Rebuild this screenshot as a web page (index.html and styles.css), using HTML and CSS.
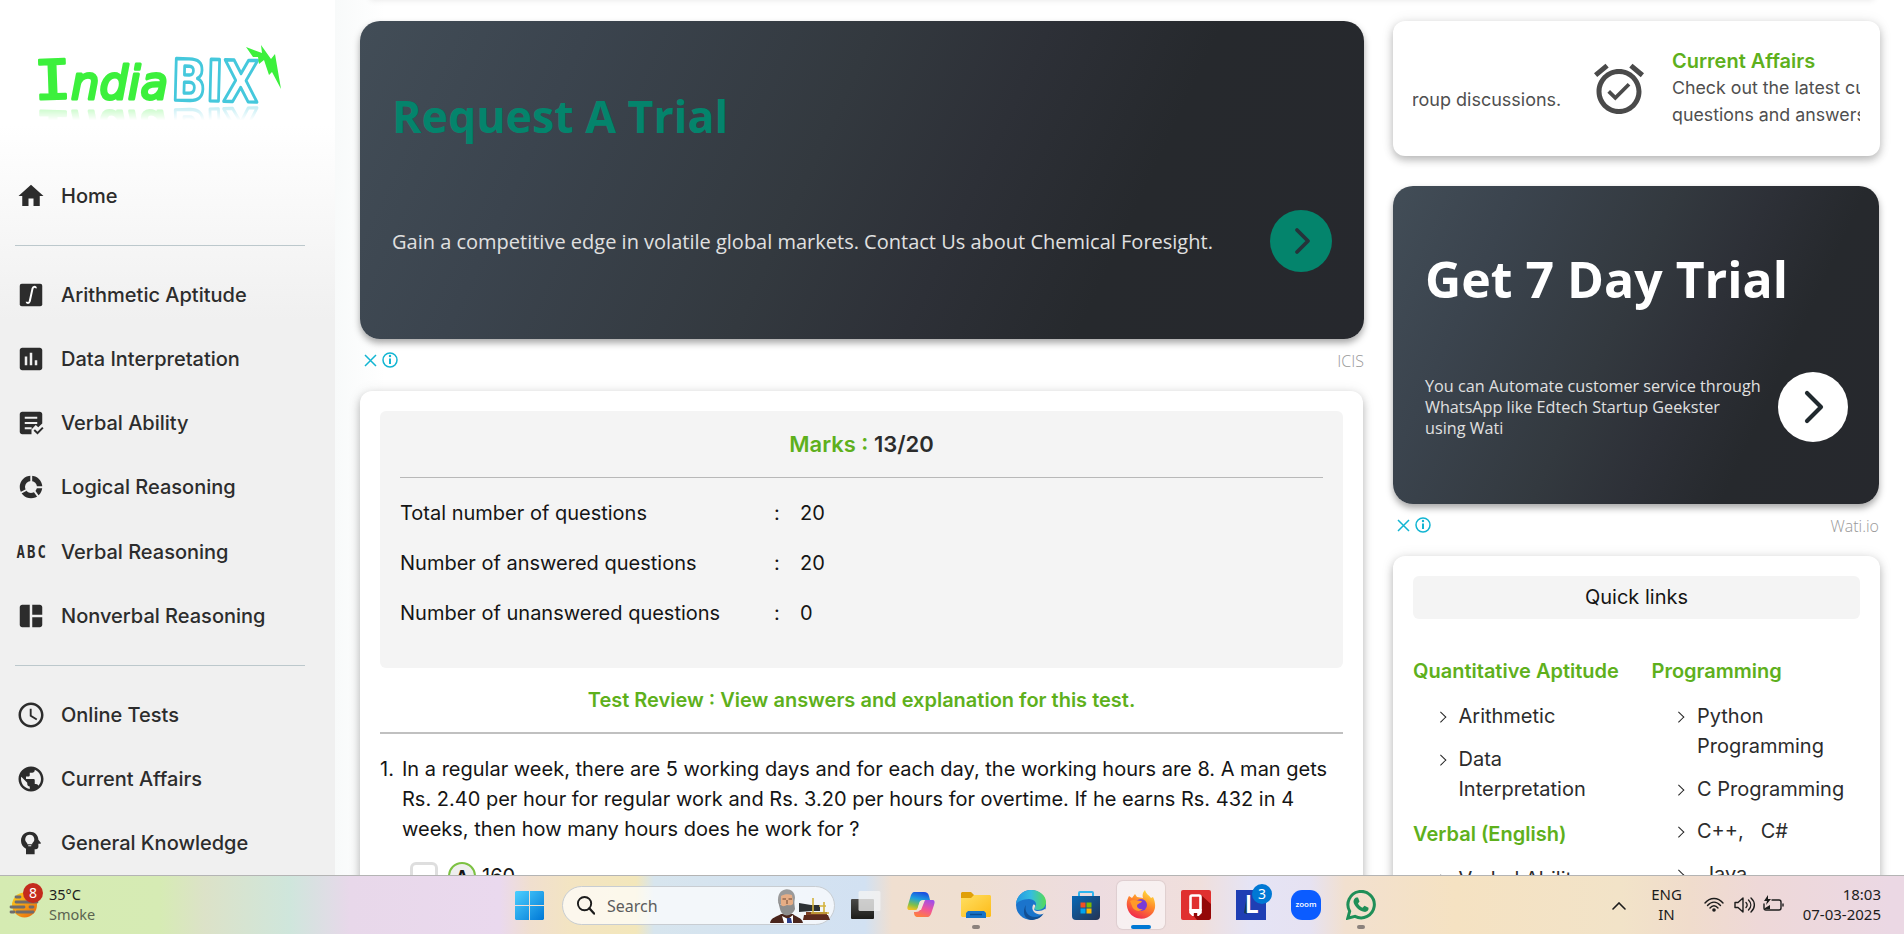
FILE: index.html
```html
<!DOCTYPE html>
<html lang="en">
<head>
<meta charset="utf-8">
<title>IndiaBIX - Online Test</title>
<link rel="stylesheet" href="styles.css">
</head>
<body>
<div class="screen">
  <div class="page">
    <aside class="sidebar">
      <svg class="logo" viewBox="0 0 250 62">
        <text class="logo-i" x="0" y="54" textLength="37" lengthAdjust="spacingAndGlyphs" transform="rotate(-2 18 35)">I</text>
        <text class="logo-india" x="37" y="54" textLength="97" lengthAdjust="spacingAndGlyphs">ndia</text>
        <text class="logo-bix" x="137" y="55" textLength="87" lengthAdjust="spacingAndGlyphs" transform="rotate(1.5 139 56)">BIX</text>
        <path fill="#3cf03c" d="M212 2L228 8 227 0 237 14 241 9 247 44 238 27 235 30 230 15 225 19 224 12 219 12z"/>
      </svg>
      <nav class="nav">
        <a class="nav-item"><svg class="ico" viewBox="0 0 24 24"><path d="M10 20v-6h4v6h5v-8h3L12 3 2 12h3v8z"/></svg><span>Home</span></a>
        <hr class="nav-line">
        <a class="nav-item"><svg class="ico" viewBox="0 0 24 24"><rect x="3" y="3" width="18" height="18" rx="1.6"/><path d="M15.8 6.6c.2-1.5-2-1.8-2.6.3L11 17c-.5 1.8-2.4 1.7-2.5.4" fill="none" stroke="#fff" stroke-width="1.6"/></svg><span>Arithmetic Aptitude</span></a>
        <a class="nav-item"><svg class="ico" viewBox="0 0 24 24"><path d="M19 3H5c-1.100 0-2 .9-2 2v14c0 1.100.9 2 2 2h14c1.100 0 2-.9 2-2V5c0-1.100-.9-2-2-2zM9 17H7v-7h2v7zm4 0h-2V7h2v10zm4 0h-2v-4h2v4z"/></svg><span>Data Interpretation</span></a>
        <a class="nav-item"><svg class="ico" viewBox="0 0 24 24"><path d="M5 3h14c1.100 0 2 .9 2 2v7.300l-3.200 3-2-1.800-3.400 3.600V21H5c-1.100 0-2-.9-2-2V5c0-1.100.9-2 2-2z"/><path d="M7 7.800h10M7 12h10M7 16.200h5.500" stroke="#f0f0f0" stroke-width="1.500"/><path d="M14.500 17.600l2.700 2.600 4.400-4.500" fill="none" stroke="#f0f0f0" stroke-width="4.500"/><path d="M14.600 17.600l2.600 2.500 4.300-4.400" fill="none" stroke="#2c2c2c" stroke-width="1.600"/></svg><span>Verbal Ability</span></a>
        <a class="nav-item"><svg class="ico" viewBox="0 0 24 24"><circle cx="12" cy="12" r="6.900" fill="none" stroke="#2c2c2c" stroke-width="4.200"/><path d="M12.200 2v6M22 12.200h-6M18.300 20.300l-3.600-5M3.200 17l5-2.600" stroke="#f0f0f0" stroke-width="1.500"/></svg><span>Logical Reasoning</span></a>
        <a class="nav-item"><svg class="ico" viewBox="0 0 24 24"><text class="abc" x="0" y="17" textLength="28.500" lengthAdjust="spacing" transform="translate(.3 0) scale(.83 1)">ABC</text></svg><span>Verbal Reasoning</span></a>
        <a class="nav-item"><svg class="ico" viewBox="0 0 24 24"><path d="M11 21H5c-1.100 0-2-.9-2-2V5c0-1.100.9-2 2-2h6v18zm2 0h6c1.100 0 2-.9 2-2v-6h-8v8zm8-10V5c0-1.100-.9-2-2-2h-6v8h8z"/></svg><span>Nonverbal Reasoning</span></a>
        <hr class="nav-line">
        <a class="nav-item"><svg class="ico" viewBox="0 0 24 24"><path d="M11.990 2C6.470 2 2 6.480 2 12s4.470 10 9.990 10C17.520 22 22 17.520 22 12S17.520 2 11.990 2zM12 20c-4.420 0-8-3.580-8-8s3.580-8 8-8 8 3.580 8 8-3.580 8-8 8zm.5-13H11v6l5.250 3.150.75-1.230-4.500-2.670z"/></svg><span>Online Tests</span></a>
        <a class="nav-item"><svg class="ico" viewBox="0 0 24 24"><path d="M12 2C6.480 2 2 6.480 2 12s4.480 10 10 10 10-4.480 10-10S17.520 2 12 2zm-1 17.930c-3.950-.49-7-3.850-7-7.930 0-.62.08-1.210.21-1.790L9 15v1c0 1.100.9 2 2 2v1.930zm6.900-2.540c-.26-.81-1-1.390-1.900-1.390h-1v-3c0-.55-.45-1-1-1H8v-2h2c.55 0 1-.45 1-1V7h2c1.100 0 2-.9 2-2v-.41c2.930 1.190 5 4.060 5 7.410 0 2.080-.8 3.970-2.100 5.390z"/></svg><span>Current Affairs</span></a>
        <a class="nav-item"><svg class="ico" viewBox="0 0 24 24"><path d="M11 3c4.200 0 6.700 2.700 6.900 6.300l1.900 2.500c.2.400 0 .8-.5.800h-1.400V15c0 1.100-.9 2-2 2h-1v4H8v-4.500C5.500 15.300 4 13 4 10.200 4 6 7.200 3 11 3z"/><path fill="#f0f0f0" d="M11 5.500a3.600 3.600 0 0 0-2 6.600V13h4v-.9a3.600 3.600 0 0 0-2-6.600zM9.800 13.800h2.400v.8H9.800z"/></svg><span>General Knowledge</span></a>
      </nav>
    </aside>

    <main class="main">
      <section class="ad ad-wide">
        <h2 class="ad-title green">Request A Trial</h2>
        <div class="ad-row">
          <p class="ad-text">Gain a competitive edge in volatile global markets. Contact Us about Chemical Foresight.</p>
          <span class="ad-go"><svg viewBox="0 0 62 62"><path d="M27 20l11 11-11 11" fill="none" stroke="#26333a" stroke-width="3.800" stroke-linecap="round" stroke-linejoin="round"/></svg></span>
        </div>
      </section>
      <div class="ad-foot">
        <svg class="ad-marks" viewBox="0 0 36 18"><path d="M1 4l11 11M12 4L1 15" stroke="#12b5d2" stroke-width="1.500"/><circle cx="26" cy="9" r="7" fill="none" stroke="#12b5d2" stroke-width="1.500"/><path d="M26 7.500v5.500" fill="none" stroke="#12b5d2" stroke-width="2"/><circle cx="26" cy="5" r="1.200" fill="#12b5d2"/></svg>
        <span>ICIS</span>
      </div>

      <section class="card result">
        <div class="score">
          <h3 class="marks"><span>Marks :</span> 13/20</h3>
          <dl class="stats">
            <dt>Total number of questions</dt><dd class="colon">:</dd><dd>20</dd>
            <dt>Number of answered questions</dt><dd class="colon">:</dd><dd>20</dd>
            <dt>Number of unanswered questions</dt><dd class="colon">:</dd><dd>0</dd>
          </dl>
        </div>
        <h4 class="review">Test Review : View answers and explanation for this test.</h4>
        <div class="question">
          <span class="q-num">1.</span>
          <p class="q-text">In a regular week, there are 5 working days and for each day, the working hours are 8. A man gets<br>Rs. 2.40 per hour for regular work and Rs. 3.20 per hours for overtime. If he earns Rs. 432 in 4<br>weeks, then how many hours does he work for ?</p>
        </div>
        <div class="option"><span class="check"></span><span class="letter">A</span><span>160</span></div>
      </section>
    </main>

    <aside class="side">
      <section class="card ticker">
        <div class="ticker-view">
          <span class="tick-old">roup discussions.</span>
          <svg class="alarm" viewBox="0 0 24 24"><path d="M22 5.720l-4.600-3.860-1.290 1.530 4.600 3.860L22 5.720zM7.880 3.390L6.600 1.860 2 5.710l1.290 1.530 4.590-3.850zM12 4c-4.970 0-9 4.030-9 9s4.020 9 9 9c4.970 0 9-4.030 9-9s-4.030-9-9-9zm0 16c-3.870 0-7-3.130-7-7s3.130-7 7-7 7 3.130 7 7-3.130 7-7 7zm-1.460-5.470L8.410 12.400l-1.060 1.060 3.180 3.180 6-6-1.060-1.060-4.930 4.950z"/></svg>
          <div class="tick-new"><b>Current Affairs</b><span>Check out the latest current</span><span>questions and answers on</span></div>
        </div>
      </section>
      <section class="ad ad-box">
        <h2 class="ad-title">Get 7 Day Trial</h2>
        <div class="ad-row">
          <p class="ad-text">You can Automate customer service through<br>WhatsApp like Edtech Startup Geekster<br>using Wati</p>
          <span class="ad-go"><svg viewBox="0 0 70 70"><path d="M29 21l14 14-14 14" fill="none" stroke="#20292e" stroke-width="4.200" stroke-linecap="round" stroke-linejoin="round"/></svg></span>
        </div>
      </section>
      <div class="ad-foot">
        <svg class="ad-marks" viewBox="0 0 36 18"><path d="M1 4l11 11M12 4L1 15" stroke="#12b5d2" stroke-width="1.500"/><circle cx="26" cy="9" r="7" fill="none" stroke="#12b5d2" stroke-width="1.500"/><path d="M26 7.500v5.500" fill="none" stroke="#12b5d2" stroke-width="2"/><circle cx="26" cy="5" r="1.200" fill="#12b5d2"/></svg>
        <span>Wati.io</span>
      </div>
      <section class="card links">
        <h3 class="links-head">Quick links</h3>
        <div class="links-cols">
          <div class="links-col">
            <h4>Quantitative Aptitude</h4>
            <ul><li>Arithmetic</li><li>Data<br>Interpretation</li></ul>
            <h4>Verbal (English)</h4>
            <ul><li>Verbal Ability</li></ul>
          </div>
          <div class="links-col">
            <h4>Programming</h4>
            <ul><li>Python<br>Programming</li><li>C Programming</li><li>C++, &nbsp; C#</li><li>&nbsp;Java</li></ul>
          </div>
        </div>
      </section>
    </aside>
    <div class="top-edge"></div>
  </div>

  <footer class="taskbar">
    <div class="weather">
      <svg class="w-icon" viewBox="0 0 36 36"><defs><linearGradient id="sun" x1="0" y1="0" x2="1" y2="1"><stop offset="0" stop-color="#ffd21c"/><stop offset="1" stop-color="#e8640c"/></linearGradient></defs><circle cx="15.500" cy="22" r="12.500" fill="url(#sun)"/><path d="M7 14h4M7 19h21M2 24h13M21 24h3M2 29h3M8 29h16" stroke="#6f6c6c" stroke-width="2.800" stroke-linecap="round"/><circle cx="24" cy="10" r="10" fill="#c42b1c"/><text x="24" y="15" text-anchor="middle" class="badge-num">8</text></svg>
      <div class="w-text"><span>35°C</span><span class="dim">Smoke</span></div>
    </div>
    <div class="apps">
      <svg class="start" viewBox="0 0 29 29"><defs><linearGradient id="win" x1="0" y1="0" x2="1" y2="1" gradientUnits="objectBoundingBox"><stop offset="0" stop-color="#4cd0ff"/><stop offset="1" stop-color="#0078d6"/></linearGradient></defs><path fill="url(#win)" d="M1 0h13v14H0V1zM15 0h13l1 1v13H15zM0 15h14v14H1l-1-1zM15 15h14v13l-1 1H15z"/></svg>
      <div class="search">
        <svg class="lens" viewBox="0 0 20 20"><circle cx="9" cy="8" r="7" fill="none" stroke="#1c1c1c" stroke-width="2"/><path d="M14 13l5 5.500" stroke="#1c1c1c" stroke-width="2.400" stroke-linecap="round"/></svg>
        <span>Search</span>
        <svg class="doodle" viewBox="0 0 60 34"><path fill="#4a251c" d="M0 34c1-6 7-6 11-9h12c2 3 9 3 10 9z"/><path fill="#fff" d="M12 27l6 3 5-4v8H14z"/><path fill="#2c3f8c" d="M17 29h4l1 5h-5z"/><path fill="#9a9a9a" d="M8 12C7-3 25-3 25 9l-1 6H9z"/><path fill="#e6ad85" d="M11 7c3-2 8-2 11-1l1 6v9H11z"/><path fill="#8d8d8d" d="M8 12l3 4c2 2 4 1 6 0 2 0 4 1 6-1l1-3 1 8c-3 8-13 9-15 0z"/><path d="M12.500 10h3.500M18.500 10h3.500M17 11v4" stroke="#6b4632"/><path fill="#5c2a1c" d="M34 26h24l2 5H33z"/><path fill="#7d4023" d="M36 23h21v3H36z"/><path fill="#2d3134" d="M29 14l12 2h9v6h-9l-12 1z"/><path d="M43 9v14M54 13v10M41 24h18M49 17h7" stroke="#d3b23c" stroke-width="1.600"/></svg>
      </div>
      <div class="icons">
        <span class="slot"><svg viewBox="0 0 30 30"><defs><linearGradient id="tv" x1="0" y1="0" x2="0" y2="1"><stop offset="0" stop-color="#4a4a48"/><stop offset="1" stop-color="#1c1c1a"/></linearGradient></defs><rect y="9" width="23" height="20" rx="1" fill="url(#tv)"/><rect x="7.500" y="1" width="22" height="20" rx="1.500" fill="#f4f4f4" fill-opacity=".78"/></svg></span>
        <span class="slot"><svg viewBox="0 0 30 30"><defs><linearGradient id="cp1" x1=".6" y1="0" x2=".3" y2="1"><stop offset="0" stop-color="#1a4fe0"/><stop offset=".4" stop-color="#1ba0dd"/><stop offset=".75" stop-color="#7fc04a"/><stop offset="1" stop-color="#f0c020"/></linearGradient><linearGradient id="cp2" x1=".7" y1="0" x2=".3" y2="1"><stop offset="0" stop-color="#a04fe8"/><stop offset=".5" stop-color="#f0559a"/><stop offset="1" stop-color="#ff7f3c"/></linearGradient></defs><path fill="url(#cp1)" d="M8 2h10c3 0 4 1 5 4l1 4h-7c-2 0-3 1-4 4l-1 4c-1 2-2 2-4 2H4c-3 0-3-2-2-5L5 5c1-2 2-3 3-3z"/><path fill="url(#cp2)" d="M22 27H12c-3 0-4-2-4-5 2 0 5 0 6-2l4-9c0-1 1-1 3-1h5c3 0 3 2 2 5l-3 9c-1 2-2 3-3 3z"/><path fill="#f2e4d8" d="M14 11l5-1-4 10h-4z"/></svg></span>
        <span class="slot running"><svg viewBox="0 0 30 30"><defs><linearGradient id="fo" x1="0" y1="0" x2="1" y2="1"><stop offset="0" stop-color="#ffdf62"/><stop offset="1" stop-color="#fdbb18"/></linearGradient></defs><path fill="#e0a008" d="M1 2h9l3 3v5H0V3z"/><path fill="url(#fo)" d="M0 8h10l3-3h16l1 1v20l-1 1H1l-1-1z"/><path fill="#1673c8" d="M5 28v-5l2-2h16l2 2v5z"/><path d="M9 24.500h12" stroke="#0a4c8f" stroke-width="1.500"/></svg></span>
        <span class="slot"><svg viewBox="0 0 30 30"><defs><linearGradient id="ed" x1="0" y1=".3" x2="1" y2=".3"><stop offset="0" stop-color="#2297e2"/><stop offset=".5" stop-color="#35bde0"/><stop offset="1" stop-color="#55db55"/></linearGradient></defs><circle cx="15" cy="15" r="15" fill="#1b74cc"/><path fill="url(#ed)" d="M0 14C1 5 8 0 15 0c9 0 15 6 15 12 0 5-4 8-8 8-3 0-5-1-3-3 3-4-1-8-6-8C7 9 1 12 0 14z"/><path fill="#124f94" d="M10 15c-2 6 2 12 9 12 4 0 7-2 9-4-3 5-8 7-13 7-7-1-9-9-5-15z"/><path fill="#f0dfd6" d="M19 17c-2 3 0 4 3 4 3 0 5-1 7-2l1 1-1 3c-3 2-8 2-11-1-2-2-2-5-1-7 1-1 3 0 2 2z"/></svg></span>
        <span class="slot"><svg viewBox="0 0 30 30"><defs><linearGradient id="st" x1="0" y1="0" x2="1" y2="1"><stop offset="0" stop-color="#0669b8"/><stop offset="1" stop-color="#263352"/></linearGradient></defs><path d="M8 7V3q0-1 1-1h12q1 0 1 1v4" fill="none" stroke="#2fb4ee" stroke-width="2"/><path fill="url(#st)" d="M1 6h28v20q0 4-4 4H5q-4 0-4-4z"/><path fill="#f25022" d="M9.500 12.500h5v5h-5z"/><path fill="#7fba00" d="M15.500 12.500h5v5h-5z"/><path fill="#00a4ef" d="M9.500 18.500h5v5h-5z"/><path fill="#ffb900" d="M15.500 18.500h5v5h-5z"/></svg></span>
        <span class="slot active"><svg viewBox="0 0 30 30"><defs><linearGradient id="ff" x1=".8" y1="0" x2=".3" y2="1"><stop offset="0" stop-color="#ffe640"/><stop offset=".45" stop-color="#ff8a2a"/><stop offset="1" stop-color="#f0244e"/></linearGradient></defs><path fill="url(#ff)" d="M3 6l3 2 3-4 2 3 6 1c-1-3 0-6 2-8 1 4 4 5 6 8l2-1c3 6 3 13-1 17-6 7-18 6-23-2C0 17 0 11 3 6z"/><circle cx="15" cy="15" r="6" fill="#7a3bd8"/><path fill="#ff9a2a" d="M4 11c4-2 7 0 12 0-1 3-5 2-5 5 0 2 3 4 6 3-4 4-10 1-11-3z"/></svg></span>
        <span class="slot"><svg viewBox="0 0 30 30"><rect width="30" height="30" rx="2" fill="#e0302f"/><path fill="#940808" d="M20 5l10 9v14l-2 2H16l-4-5z"/><rect x="9.500" y="5.500" width="10" height="15" rx="1.500" fill="#e0302f" stroke="#fff" stroke-width="2.600"/><path fill="#fff" d="M8.200 19h12.600v4l-3 3h-1.600v-3h-3.400v3h-1.600l-3-3z"/></svg></span>
        <span class="slot"><svg viewBox="0 0 30 30"><rect width="30" height="30" fill="#1f3fb4"/><path fill="#153a50" d="M11 5L8 23l3 1z"/><text class="l-letter" x="9.500" y="23" textLength="13" lengthAdjust="spacingAndGlyphs">L</text></svg><b class="count">3</b></span>
        <span class="slot"><svg viewBox="0 0 30 30"><rect width="30" height="30" rx="11" fill="#0b5cff"/><text class="zoom-word" x="4.500" y="17" textLength="21" lengthAdjust="spacingAndGlyphs">zoom</text></svg></span>
        <span class="slot running"><svg viewBox="0 0 30 30"><path fill="none" stroke="#1f8f58" stroke-width="3" d="M1.800 28.200l1.900-7A13.200 13.200 0 1 1 9 26.300z"/><path fill="#1f8f58" d="M10 7.500h2l1.500 4-1.500 2c1 2 2.500 3.500 4.500 4.300l2-2 4 2c.5 3-2 4.500-4.500 4C13 21 8.500 16.500 7.500 12c0-2 1-4 2.500-4.500z"/></svg></span>
      </div>
    </div>
    <div class="tray">
      <svg class="chev" viewBox="0 0 14 8"><path d="M1 7l6-6 6 6" fill="none" stroke="#1c1c1c" stroke-width="1.600" stroke-linecap="round"/></svg>
      <div class="lang"><span>ENG</span><span>IN</span></div>
      <svg class="status" viewBox="0 0 80 20"><g fill="none" stroke="#1c1c1c" stroke-width="1.400" stroke-linecap="round"><path d="M1 8c5-6 13-6 18 0"/><path d="M3.500 10.500c4-4.500 9-4.500 13 0"/><path d="M6 13c2.500-3 5.500-3 8 0"/><path d="M31 7.500h3l5-4.500v14l-5-4.500h-3z" stroke-linejoin="round"/><path d="M42 7.500c1.500 1.500 1.500 3.500 0 5M44.500 5c3 3 3 7 0 10M47 3c4.500 4 4.500 10 0 14"/><path d="M68 5h7q2 0 2 2v6q0 2-2 2H62q-2 0-2-2V9M79 9v2"/></g><circle cx="10" cy="15" r="1.800" fill="#1c1c1c"/><path fill="#1c1c1c" d="M64 0l-4 6h3l-1 4 5-6h-3zM61 13l5-3v4h-5z"/></svg>
      <div class="clock"><span>18:03</span><span>07-03-2025</span></div>
    </div>
  </footer>
</div>
</body>
</html>
```
FILE: styles.css
```css
* { box-sizing: border-box; }
body { margin: 0; font-family: Inter, "Liberation Sans", sans-serif; font-size: 20px; color: #151515; }
h2, h3, h4, p, ul, dl, dd { margin: 0; padding: 0; }
.screen { width: 1904px; height: 934px; overflow: hidden; display: flex; flex-direction: column; }
.page { position: relative; height: 875px; overflow: hidden; display: flex; background: linear-gradient(90deg, #f8fafa 335px, #fff 385px); }
.top-edge { position: absolute; left: 370px; right: 30px; top: -10px; height: 8px; box-shadow: 0 2px 6px rgba(0,0,0,.1); }

.sidebar { flex: none; width: 335px; height: 875px; padding-left: 15px; background: linear-gradient(#fff 125px, #f0f0f0 320px); }
.logo { display: block; width: 250px; height: 62px; margin: 45px 0 0 19px; overflow: visible; -webkit-box-reflect: below -4px linear-gradient(transparent 72%, rgba(0,0,0,.4)); }
.logo text { font-family: "DejaVu Sans Mono", monospace; fill: #3cf03c; stroke: #3cf03c; stroke-width: 2.500; stroke-linejoin: round; font-size: 54px; }
.logo .logo-india { font-family: "DejaVu Sans", sans-serif; font-style: oblique; font-size: 47px; stroke-width: 3; }
.logo .logo-bix { font-family: "DejaVu Sans", sans-serif; font-weight: bold; font-size: 57px; fill: #fff; stroke: #45c8dc; stroke-width: 3.400; }
.nav { margin-top: 57px; }
.nav-item { display: flex; align-items: center; gap: 15px; height: 64.100px; padding-left: 1px; font-weight: 500; color: #2c2c2c; }
.ico { width: 30px; height: 30px; fill: #2c2c2c; }
.abc { font: bold 13.500px "DejaVu Sans Mono", monospace; }
.nav-line { width: 290px; height: 1px; border: 0; margin: 17px 0; background: #bcc8cc; }

.main { width: 1004px; margin: 21px 0 0 25px; flex: none; }
.side { width: 487px; margin: 21px 0 0 29px; flex: none; }
.card { background: #fff; border-radius: 12px; box-shadow: 0 4px 8px rgba(0,0,0,.25), 0 0 14px rgba(0,0,0,.08); }
.ad { height: 318px; border-radius: 20px; padding-left: 32px; color: #fff; font-family: "Open Sans", sans-serif; background: linear-gradient(115deg, #424d57 0%, #3b444e 20%, #33393f 45%, #2d3037 60%, #26292d 75%, #26282d 100%); box-shadow: 0 4px 7px rgba(0,0,0,.35); }
.ad-title { font-size: 44.700px; line-height: 60px; font-weight: 700; }
.ad-title.green { color: #04846c; }
.ad-row { display: flex; align-items: center; justify-content: space-between; }
.ad-text { color: #e0e0e0; }
.ad-go { display: flex; flex: none; border-radius: 50%; }
.ad-go svg { width: 100%; }
.ad-wide { padding-top: 65px; padding-right: 32px; }
.ad-wide .ad-row { margin-top: 64px; }
.ad-wide .ad-text { font-size: 20px; }
.ad-wide .ad-go { width: 62px; height: 62px; background: #04846c; }
.ad-box { width: 486px; margin-top: 30px; padding: 59px 31px 0 32px; }
.ad-box .ad-title { font-size: 50px; line-height: 68px; }
.ad-box .ad-row { margin-top: 59px; }
.ad-box .ad-text { font-size: 16.200px; line-height: 21px; white-space: nowrap; }
.ad-box .ad-go { width: 70px; height: 70px; background: #fff; }
.ad-foot { height: 52px; padding: 11px 0 0 4px; display: flex; justify-content: space-between; align-items: flex-start; font: 300 16px/22px "Open Sans", sans-serif; color: #999; }
.side .ad-foot { padding-right: 1px; }
.ad-marks { width: 36px; height: 18px; margin-top: 1px; }

.result { width: 1003px; height: 560px; padding: 20px; }
.score { height: 257px; padding: 0 20px; border-radius: 6px; background: #f4f4f4; }
.marks { height: 67px; border-bottom: 1px solid #b8b8b8; font-size: 22px; font-weight: 600; line-height: 66px; text-align: center; color: #2c2c2c; }
.marks span, .review { color: #5eb01c; }
.stats { margin-top: 10px; display: grid; grid-template-columns: 374px 26px 1fr; line-height: 50px; }
.review { height: 66px; border-bottom: 2px solid #c0c0c0; text-align: center; font-size: 20px; font-weight: 600; line-height: 64px; }
.question { margin-top: 20px; display: flex; line-height: 30px; }
.q-num { width: 22px; }
.option { display: flex; margin: 18px 0 0 30px; line-height: 29px; }
.check { width: 28px; height: 28px; border: 3px solid #dedede; border-radius: 6px; }
.letter { width: 28px; height: 28px; margin: 0 6px 0 10px; border: 2px solid #7cc142; border-radius: 50%; background: #eee; font-size: 17px; font-weight: 700; line-height: 26px; text-align: center; }

.ticker { height: 135px; padding: 0 20px; color: #4f4f4f; font-size: 17.800px; }
.ticker-view { height: 135px; display: flex; overflow: hidden; white-space: nowrap; line-height: 27px; }
.tick-old { flex: none; width: 176px; padding-top: 65px; margin-left: -1px; font-size: 18px; }
.alarm { flex: none; width: 60px; height: 60px; margin: 38px 23px 0 1px; fill: #4a4a4a; }
.tick-new { display: flex; flex-direction: column; padding-top: 27px; }
.tick-new b { font-size: 20px; font-weight: 600; color: #5eb01c; line-height: 26px; }
.links { height: 400px; padding: 20px; }
.links-head { height: 43px; border-radius: 6px; background: #f4f4f4; font-size: 20px; font-weight: 400; line-height: 43px; text-align: center; }
.links-cols { display: flex; margin-top: 37px; line-height: 30px; }
.links-col { width: 238.500px; flex: none; }
.links-col h4 { font-size: 20px; font-weight: 600; color: #5eb01c; white-space: nowrap; }
.links-col ul { list-style: none; padding: 2px 0 3px 45.500px; color: #2c2c2c; }
.links-col li { position: relative; margin: 12.800px 0; white-space: nowrap; }
.links-col li::before { content: ""; position: absolute; left: -22px; top: 12px; width: 6.500px; height: 6.500px; border: solid #222; border-width: 1.700px 1.700px 0 0; transform: rotate(45deg); }

.taskbar { height: 59px; display: flex; border-top: 1px solid #b4b4b4; font: 15.500px/20px "Noto Sans", "Open Sans", sans-serif; color: #1c1c1c; background: linear-gradient(90deg, #d5ebb2 0, #d6ebb4 160px, #dce2c8 205px, #cfe6dc 290px, #e8d8ea 350px, #ead9ee 500px, #f0dfcf 530px, #f3e4c2 570px, #f3e7bb 636px, #d7e5ee 654px, #d2e1f2 865px, #f0dfd0 892px, #efdfd1 960px, #eddce0 1095px, #f0dfdc 1200px, #e5e4f5 1250px, #e6e2f2 1310px, #f2e0cf 1345px, #f5e2c2 1455px, #f2e3c8 1620px, #f0dccc 1690px, #eed8d8 1760px, #ebd8e4 1890px); }
.weather { width: 515px; display: flex; padding: 7px 0 0 9px; gap: 4px; flex: none; }
.w-icon { width: 36px; height: 36px; }
.badge-num { font: 14px "Noto Sans", sans-serif; fill: #fff; }
.w-text, .lang, .clock { display: flex; flex-direction: column; }
.w-text { font-size: 14.500px; margin-top: 1px; }
.dim { color: #5b6450; }
.apps { display: flex; width: 875px; flex: none; }
.start { width: 29px; height: 29px; margin-top: 15px; }
.search { width: 273px; height: 39px; margin: 10px 3px 0 18px; padding: 0 4px 0 13px; display: flex; align-items: center; border: 1px solid #c8cdd2; border-radius: 20px; background: rgba(255,255,255,.7); font-size: 16px; color: #5c5c5c; }
.lens { width: 19px; height: 19px; margin-right: 12px; }
.doodle { width: 60px; height: 34px; margin-left: auto; }
.icons { display: flex; padding-top: 5px; }
.slot { position: relative; width: 55px; height: 48px; display: flex; justify-content: center; padding-top: 9px; }
.slot svg { width: 30px; height: 30px; }
.slot.active { margin: 0 3.500px; width: 48px; border-radius: 6px; background: rgba(255,255,255,.55); box-shadow: 0 0 1px 1px rgba(0,0,0,.07); }
.slot.running::after, .slot.active::after { content: ""; position: absolute; bottom: 0; left: 50%; width: 8px; height: 4px; margin-left: -4px; border-radius: 2px; background: #8b817c; }
.slot.active::after { width: 20px; margin-left: -10px; background: #0078d4; }
.count { position: absolute; left: 29px; top: 3px; width: 20px; height: 20px; border-radius: 50%; background: #0078d4; color: #fff; font-weight: 400; font-size: 14px; text-align: center; }
.l-letter { font: bold 25px "Liberation Sans", sans-serif; fill: #fff; }
.zoom-word { font: 600 7.500px "Open Sans", sans-serif; fill: #fff; }
.tray { display: flex; flex: 1; padding-right: 23px; justify-content: flex-end; }
.chev { width: 14px; height: 8px; margin-top: 26px; margin-right: 26px; }
.lang { width: 30px; align-items: center; margin: 8px 22px 0 0; font-size: 15px; }
.status { width: 80px; height: 20px; margin: 19px 18.500px 0 0; }
.clock { width: 79px; align-items: flex-end; margin-top: 8px; white-space: nowrap; font-size: 15px; }
```
